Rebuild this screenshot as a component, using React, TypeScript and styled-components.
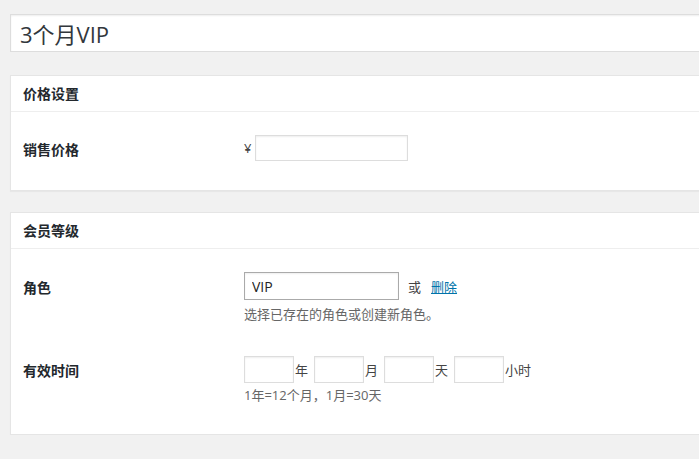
import styled, { createGlobalStyle } from 'styled-components';

const GlobalStyle = createGlobalStyle`
  html, body {
    margin: 0;
    padding: 0;
    overflow: hidden;
    background: #f1f1f1;
  }
  body {
    font-family: "Open Sans", "Noto Sans CJK SC", sans-serif;
    font-size: 13px;
    color: #444;
  }
`;

const App = () => {
  return (
    <>
      <GlobalStyle />
      <Page>
        <TitleInput type='text' defaultValue='3个月VIP' />

        <Postbox>
          <BoxTitle>价格设置</BoxTitle>
          <Inside>
            <Row>
              <Label>销售价格</Label>
              <Field>
                <Inline>
                  <Currency>¥</Currency>
                  <TextInput type='text' $width={153} $height={26} />
                </Inline>
              </Field>
            </Row>
          </Inside>
        </Postbox>

        <Postbox>
          <BoxTitle>会员等级</BoxTitle>
          <Inside>
            <Row>
              <Label $top={6}>角色</Label>
              <Field>
                <Inline>
                  <TextInput type='text' defaultValue='VIP' $width={155} $height={28} $dark />
                  <Or>或</Or>
                  <DeleteLink href='#'>删除</DeleteLink>
                </Inline>
                <Description $gap={4}>选择已存在的角色或创建新角色。</Description>
              </Field>
            </Row>
            <Row>
              <Label>有效时间</Label>
              <Field>
                <Inline>
                  <TextInput type='text' $width={50} $height={27} />
                  <Unit>年</Unit>
                  <TextInput type='text' $width={50} $height={27} />
                  <Unit>月</Unit>
                  <TextInput type='text' $width={50} $height={27} />
                  <Unit>天</Unit>
                  <TextInput type='text' $width={50} $height={27} />
                  <Unit>小时</Unit>
                </Inline>
                <Description $gap={2}>1年=12个月，1月=30天</Description>
              </Field>
            </Row>
          </Inside>
        </Postbox>
      </Page>
    </>
  );
};

export default App;

const Page = styled.div`
  width: 760px;
  padding: 14px 0 0 10px;
  display: flex;
  flex-direction: column;
  gap: 21px;
`;

const TitleInput = styled.input`
  box-sizing: border-box;
  width: 100%;
  height: 38px;
  margin: 0 0 2px;
  padding: 3px 9px;
  border: 1px solid #ddd;
  box-shadow: inset 0 1px 2px rgba(0, 0, 0, 0.07);
  background: #fff;
  color: #32373c;
  font-family: "Open Sans", "Noto Sans CJK SC", sans-serif;
  font-size: 22px;
  line-height: 1;
  outline: none;
`;

const Postbox = styled.div`
  background: #fff;
  border: 1px solid #e5e5e5;
  box-shadow: 0 1px 1px rgba(0, 0, 0, 0.04);
`;

const BoxTitle = styled.h2`
  margin: 0;
  padding: 8px 12px;
  font-size: 14px;
  line-height: 19px;
  font-weight: 600;
  color: #23282d;
  border-bottom: 1px solid #eee;
`;

const Inside = styled.div`
  padding: 7px 12px 13px;
`;

const Row = styled.div`
  display: grid;
  grid-template-columns: 221px 1fr;
  align-items: start;
  padding: 16px 0;
`;

const Label = styled.div<{ $top?: number }>`
  padding-top: ${({ $top }) => $top ?? 5}px;
  font-size: 14px;
  line-height: 20px;
  font-weight: 600;
  color: #23282d;
`;

const Field = styled.div`
  display: flex;
  flex-direction: column;
  align-items: flex-start;
`;

const Inline = styled.div`
  display: flex;
  align-items: center;
`;

const Currency = styled.span`
  width: 11px;
  color: #444;
`;

const TextInput = styled.input<{ $width: number; $height: number; $dark?: boolean }>`
  box-sizing: border-box;
  width: ${({ $width }) => $width}px;
  height: ${({ $height }) => $height}px;
  margin: 0;
  padding: 2px 7px;
  border: 1px solid ${({ $dark }) => ($dark ? '#aaa' : '#ddd')};
  box-shadow: inset 0 1px 2px rgba(0, 0, 0, 0.07);
  background: #fff;
  color: #222;
  font-family: "Open Sans", "Noto Sans CJK SC", sans-serif;
  font-size: 14px;
  outline: none;
`;

const Or = styled.span`
  margin: 0 10px 0 9px;
  color: #444;
`;

const DeleteLink = styled.a`
  color: #0073aa;
  text-decoration: underline;
`;

const Unit = styled.span`
  margin: 0 6px 0 1px;
  color: #444;
`;

const Description = styled.p<{ $gap: number }>`
  margin: ${({ $gap }) => $gap}px 0 0;
  line-height: 20px;
  color: #666;
`;
